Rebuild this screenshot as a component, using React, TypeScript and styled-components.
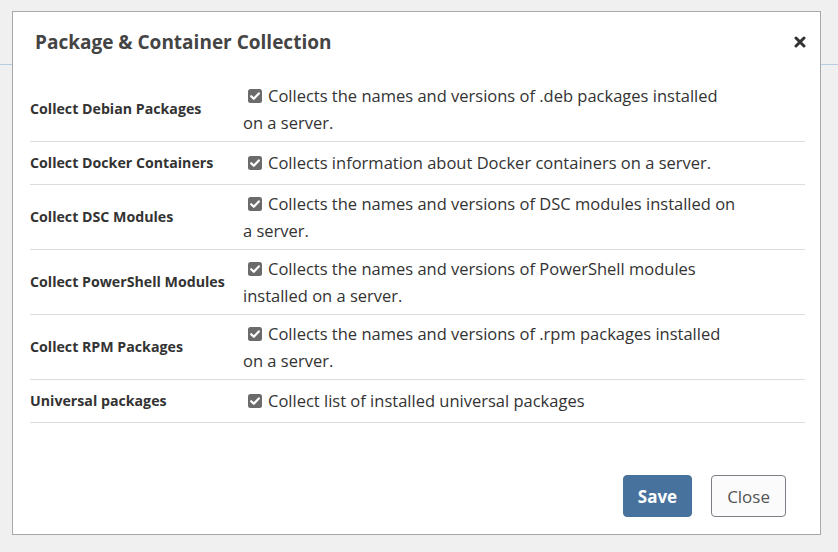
import * as React from 'react'
import styled, { createGlobalStyle } from 'styled-components'

const GlobalStyle = createGlobalStyle`
    html, body {
        margin: 0;
        padding: 0;
        background: #f0f0f0;
        font-family: "Open Sans", "Noto Sans", sans-serif;
        color: #333;
    }
`

const SETTINGS = [
    { label: 'Collect Debian Packages', description: 'Collects the names and versions of .deb packages installed on a server.' },
    { label: 'Collect Docker Containers', description: 'Collects information about Docker containers on a server.' },
    { label: 'Collect DSC Modules', description: 'Collects the names and versions of DSC modules installed on a server.' },
    { label: 'Collect PowerShell Modules', description: 'Collects the names and versions of PowerShell modules installed on a server.' },
    { label: 'Collect RPM Packages', description: 'Collects the names and versions of .rpm packages installed on a server.' },
    { label: 'Universal packages', description: 'Collect list of installed universal packages' },
]

const Page = styled.div`
    position: relative;
    height: 552px;
    overflow: hidden;
    padding: 11px 17px 0 12px;
    box-sizing: border-box;
`

const BackdropLine = styled.div`
    position: absolute;
    left: 0;
    right: 0;
    top: 64px;
    border-top: 1px solid #b9cde0;
`

const Modal = styled.div`
    position: relative;
    background: #fff;
    border: 1px solid #a8a8a8;
    height: 524px;
    box-sizing: border-box;
    display: flex;
    flex-direction: column;
`

const ModalHeader = styled.div`
    display: flex;
    align-items: center;
    justify-content: space-between;
    padding: 17px 14px 0 22px;
    height: 42px;
    box-sizing: border-box;
`

const Title = styled.h4`
    margin: 0;
    font-size: 19px;
    font-weight: 700;
    color: #444;
`

const CloseX = styled.button`
    border: 0;
    background: none;
    padding: 0;
    cursor: pointer;
    display: flex;
`

const ModalBody = styled.div`
    padding: 23px 15px 0 17px;
    flex: 1;
`

const Table = styled.table`
    width: 100%;
    border-collapse: collapse;
`

const Row = styled.tr`
    border-bottom: 1px solid #dcdcdc;
`

const LabelCell = styled.td`
    width: 213px;
    padding: 11px 0;
    font-size: 14.2px;
    line-height: 20px;
    font-weight: 700;
    color: #333;
    vertical-align: middle;
`

const DescCell = styled.td`
    padding: 6px 66px 5px 0;
    font-size: 16.5px;
    line-height: 26px;
    color: #333;
    vertical-align: middle;
`

const Check = styled.span`
    display: inline-block;
    vertical-align: -1px;
    margin: 0 6px 0 5px;
`

const ModalFooter = styled.div`
    display: flex;
    justify-content: flex-end;
    gap: 19px;
    padding: 0 34px 17px 0;
`

const Button = styled.button<{ $primary?: boolean }>`
    height: 42px;
    padding: 0 ${p => (p.$primary ? 14 : 15)}px;
    border-radius: 4px;
    font-family: inherit;
    font-size: 17px;
    font-weight: ${p => (p.$primary ? 700 : 400)};
    color: ${p => (p.$primary ? '#fff' : '#555')};
    background: ${p => (p.$primary ? '#48729e' : '#fbfbfb')};
    border: 1px solid ${p => (p.$primary ? '#48729e' : '#7a7f86')};
    cursor: pointer;
`

const CheckIcon = () => (
    <svg width="14" height="14" viewBox="0 0 14 14">
        <rect x="0" y="0" width="14" height="14" rx="2.5" fill="#6b6b6b" />
        <path d="M3.2 7.2 L5.8 9.8 L10.8 4.4" fill="none" stroke="#fff" strokeWidth="2.2" strokeLinecap="round" strokeLinejoin="round" />
    </svg>
)

const TimesIcon = () => (
    <svg width="12" height="12" viewBox="0 0 12 12">
        <path d="M2 2 L10 10 M10 2 L2 10" stroke="#333" strokeWidth="3" strokeLinecap="round" />
    </svg>
)

const App = () => {
    return (
        <Page>
            <GlobalStyle />
            <BackdropLine />
            <Modal>
                <ModalHeader>
                    <Title>Package &amp; Container Collection</Title>
                    <CloseX aria-label="close"><TimesIcon /></CloseX>
                </ModalHeader>
                <ModalBody>
                    <Table>
                        <tbody>
                            {SETTINGS.map(({ label, description }) => (
                                <Row key={label}>
                                    <LabelCell>{label}</LabelCell>
                                    <DescCell>
                                        <Check><CheckIcon /></Check>
                                        {description}
                                    </DescCell>
                                </Row>
                            ))}
                        </tbody>
                    </Table>
                </ModalBody>
                <ModalFooter>
                    <Button $primary>Save</Button>
                    <Button>Close</Button>
                </ModalFooter>
            </Modal>
        </Page>
    )
}

export default App
